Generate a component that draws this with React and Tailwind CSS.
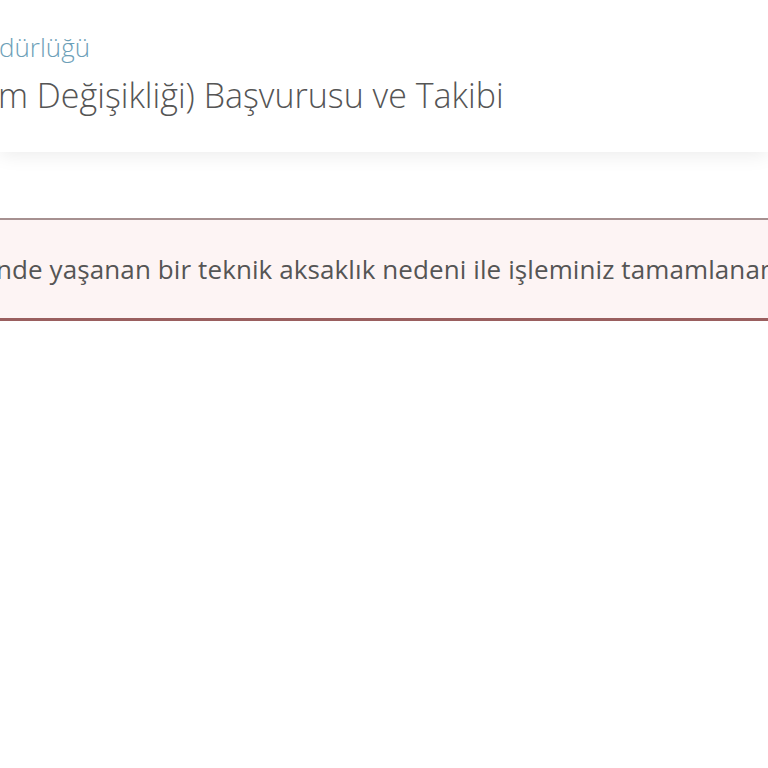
export default function App() {
  return (
    <div className="min-h-[768px] w-[768px] overflow-hidden bg-white" style={{ fontFamily: '"Open Sans", "Noto Sans", sans-serif' }}>
      <header className="relative z-10 h-[152px] bg-white shadow-[0_3px_18px_rgba(0,0,0,0.08)]">
        <div className="pt-[27px] whitespace-nowrap">
          <div className="-ml-[1px] text-[26px] font-light leading-[40px] text-[#6d9fb8]">dürlüğü</div>
          <h1 className="-ml-[2px] mt-[3px] text-[34px] font-light leading-[50px] text-[#555]">m Değişikliği) Başvurusu ve Takibi</h1>
        </div>
      </header>
      <main className="pt-[66px]">
        <div className="flex h-[103px] items-center whitespace-nowrap border-t-2 border-b-[3px] border-t-[#a69090] border-b-[#9a5f5f] bg-[#fdf4f4]">
          <p className="-ml-[4px] text-[26px] tracking-[0.1px] text-[#555]">nde yaşanan bir teknik aksaklık nedeni ile işleminiz tamamlanamamıştır.</p>
        </div>
      </main>
    </div>
  );
}
